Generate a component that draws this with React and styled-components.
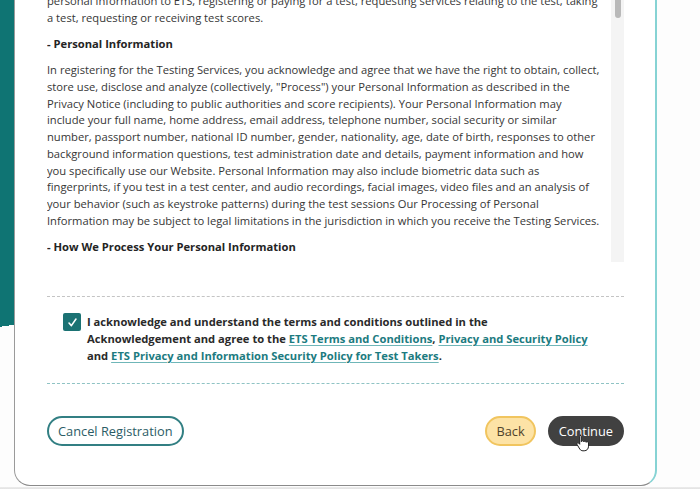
import styled, { createGlobalStyle } from "styled-components";

const GlobalStyle = createGlobalStyle`
  html, body {
    margin: 0;
    padding: 0;
    background: #fdfdfd;
  }
  body {
    font-family: "Open Sans", "Noto Sans", sans-serif;
    color: #333;
  }
`;

const intro = [
  "personal information to ETS, registering or paying for a test, requesting services relating to the test, taking",
  "a test, requesting or receiving test scores.",
];

const personal = [
  "In registering for the Testing Services, you acknowledge and agree that we have the right to obtain, collect,",
  'store use, disclose and analyze (collectively, "Process") your Personal Information as described in the',
  "Privacy Notice (including to public authorities and score recipients). Your Personal Information may",
  "include your full name, home address, email address, telephone number, social security or similar",
  "number, passport number, national ID number, gender, nationality, age, date of birth, responses to other",
  "background information questions, test administration date and details, payment information and how",
  "you specifically use our Website. Personal Information may also include biometric data such as",
  "fingerprints, if you test in a test center, and audio recordings, facial images, video files and an analysis of",
  "your behavior (such as keystroke patterns) during the test sessions Our Processing of Personal",
  "Information may be subject to legal limitations in the jurisdiction in which you receive the Testing Services.",
];

function Lines({ lines }) {
  return (
    <Paragraph>
      {lines.map((l, i) => (
        <Line key={i}>{l}</Line>
      ))}
    </Paragraph>
  );
}

export default function App() {
  return (
    <>
      <GlobalStyle />
      <Page>
        <Main>
          <Card>
            <ScrollArea>
              <TextColumn>
                <ScrolledContent>
                  <Lines lines={intro} />
                  <Heading>- Personal Information</Heading>
                  <Lines lines={personal} />
                  <Heading>- How We Process Your Personal Information</Heading>
                </ScrolledContent>
              </TextColumn>
              <ScrollTrack>
                <ScrollThumb />
              </ScrollTrack>
            </ScrollArea>

            <AckSection>
              <Checkbox>
                <svg width="11" height="11" viewBox="0 0 12 12">
                  <path
                    d="M2.2 6.6 L4.8 9.4 L9.8 2.2"
                    fill="none"
                    stroke="#fff"
                    strokeWidth="1.7"
                    strokeLinecap="round"
                    strokeLinejoin="round"
                  />
                </svg>
              </Checkbox>
              <AckText>
                I acknowledge and understand the terms and conditions outlined in the
                <br />
                Acknowledgement and agree to the <Link>ETS Terms and Conditions</Link>,{" "}
                <Link>Privacy and Security Policy</Link>
                <br />
                and <Link>ETS Privacy and Information Security Policy for Test Takers</Link>.
              </AckText>
            </AckSection>

            <Actions>
              <PillButton $variant="outline">Cancel Registration</PillButton>
              <RightGroup>
                <PillButton $variant="back">Back</PillButton>
                <PillButton $variant="dark">
                  Continue
                  <Cursor width="14" height="18" viewBox="0 0 14 18">
                    <path
                      d="M4 1.2c.8 0 1.3.6 1.3 1.3v5.2c.2-.6.7-.9 1.3-.9.7 0 1.2.5 1.2 1.1.2-.5.7-.8 1.2-.8.7 0 1.2.5 1.2 1.2.2-.4.6-.6 1.1-.6.7 0 1.2.5 1.2 1.2v3.3c0 2.6-1.6 4.6-4.3 4.6H7c-1.4 0-2.4-.6-3.200-1.7L1.1 10.6c-.4-.6-.3-1.3.3-1.6.5-.3 1.1-.2 1.5.3l.8 1V2.5c0-.7.5-1.3 1.3-1.3z"
                      fill="#fff"
                      stroke="#222"
                      strokeWidth="1"
                    />
                  </Cursor>
                </PillButton>
              </RightGroup>
            </Actions>
          </Card>
        </Main>
        <BottomStrip />
      </Page>
    </>
  );
}

const Page = styled.div`
  width: 700px;
  height: 489px;
  display: flex;
  flex-direction: column;
  overflow: hidden;
  background-color: #fdfdfd;
  background-image: linear-gradient(172deg, #0f7473 0, #0f7473 99%, transparent 99%);
  background-repeat: no-repeat;
  background-size: 15px 328px;
`;

const Main = styled.div`
  height: 487px;
  display: flex;
  padding-left: 14px;
`;

const Card = styled.div`
  width: 643px;
  height: 486px;
  box-sizing: border-box;
  background: #fff;
  border-left: 1px solid #9a9a9a;
  border-right: 2px solid #86d3d4;
  border-bottom: 1px solid #8a8a8a;
  border-radius: 0 0 16px 16px;
  padding: 0 31px 0 32px;
  display: flex;
  flex-direction: column;
`;

const ScrollArea = styled.div`
  height: 262px;
  display: flex;
`;

const TextColumn = styled.div`
  flex: 1;
  overflow: hidden;
`;

const ScrolledContent = styled.div`
  margin-top: -7px;
`;

const ScrollTrack = styled.div`
  width: 13px;
  background: #f4f4f4;
  display: flex;
  justify-content: center;
`;

const ScrollThumb = styled.div`
  width: 6px;
  height: 18px;
  border-radius: 0 0 3px 3px;
  background: #b9b9b9;
`;

const Paragraph = styled.div`
  margin-bottom: 9.6px;
`;

const Line = styled.div`
  font-size: 11.2px;
  line-height: 16.7px;
  white-space: nowrap;
  color: #363636;
`;

const Heading = styled.div`
  font-size: 11.2px;
  line-height: 16.7px;
  font-weight: 700;
  color: #242424;
  margin-bottom: 9.6px;
`;

const AckSection = styled.div`
  margin-top: 34px;
  border-top: 1px dashed #c4c4c4;
  border-bottom: 1px dashed #8fc3c4;
  padding: 16px 0 19px 16px;
  display: flex;
  gap: 6px;
  align-items: flex-start;
`;

const Checkbox = styled.div`
  width: 18px;
  height: 18px;
  flex: none;
  border-radius: 2px;
  background: #1b7273;
  display: flex;
  align-items: center;
  justify-content: center;
`;

const AckText = styled.div`
  font-size: 11.2px;
  line-height: 17px;
  font-weight: 700;
  color: #2a2a2a;
`;

const Link = styled.a`
  color: #1c7b80;
  text-decoration: underline;
  text-decoration-color: #6fb6b8;
  text-underline-offset: 2px;
  cursor: pointer;
`;

const Actions = styled.div`
  margin-top: 32px;
  display: flex;
  justify-content: space-between;
  align-items: center;
`;

const RightGroup = styled.div`
  display: flex;
  gap: 12px;
`;

const variants = {
  outline: `
    background: #fff;
    border: 2px solid #327f83;
    color: #2b5c66;
  `,
  back: `
    background: #fde3a6;
    border: 2px solid #f1c55f;
    color: #4f432c;
  `,
  dark: `
    background: #414141;
    border: 2px solid #414141;
    color: #fff;
  `,
};

const PillButton = styled.button`
  position: relative;
  height: 30px;
  box-sizing: border-box;
  border-radius: 15px;
  padding: 0 9px;
  font-family: "Open Sans", "Noto Sans", sans-serif;
  font-size: 12.8px;
  line-height: 26px;
  ${(p) => variants[p.$variant]}
`;

const Cursor = styled.svg`
  position: absolute;
  left: 26px;
  top: 16px;
`;

const BottomStrip = styled.div`
  flex: 1;
  background: linear-gradient(#ececec, #e2e2e2);
`;
